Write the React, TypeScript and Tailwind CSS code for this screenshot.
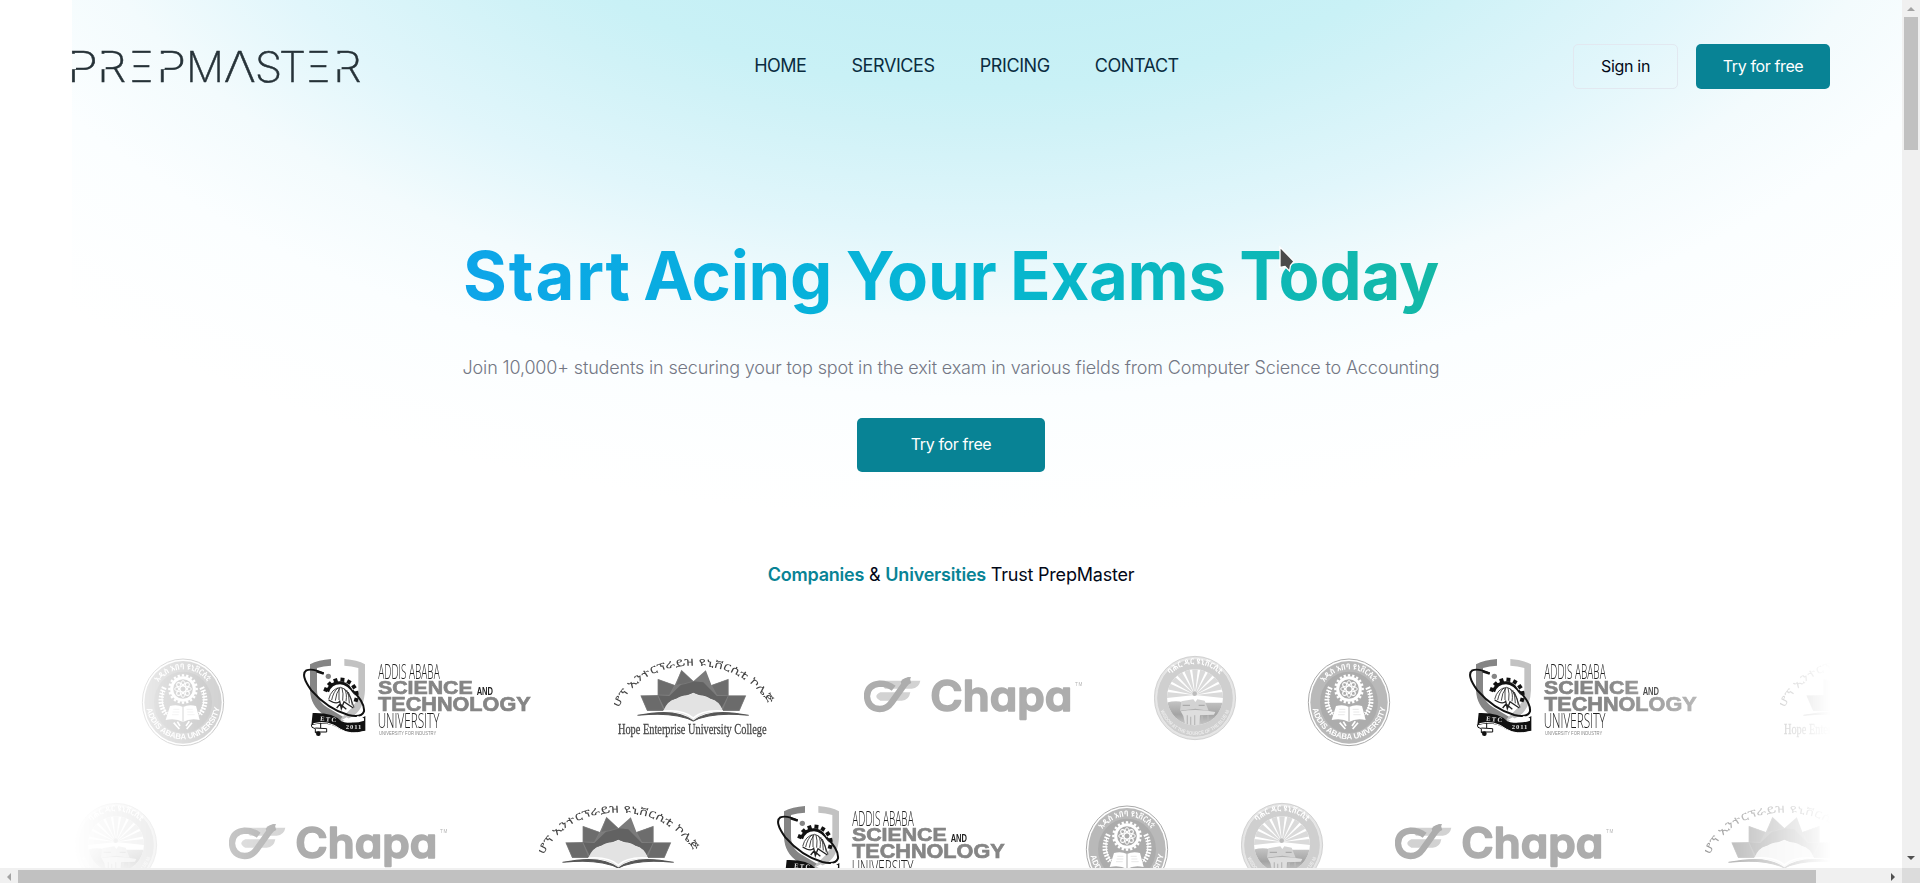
import React from "react";

type LogoProps = { className: string };

const wordmark: { ch: string; x: number; w: number; stem?: number }[] = [
  { ch: "P", x: -5, w: 31, stem: 0 },
  { ch: "R", x: 25, w: 29.4, stem: 29.7 },
  { ch: "Ξ", x: 58, w: 23 },
  { ch: "P", x: 84, w: 30.2, stem: 88.7 },
  { ch: "M", x: 113.9, w: 38 },
  { ch: "Λ", x: 151.8, w: 32 },
  { ch: "S", x: 182.7, w: 27.5 },
  { ch: "T", x: 206.9, w: 27 },
  { ch: "Ξ", x: 235, w: 23 },
  { ch: "R", x: 261, w: 28.6, stem: 265.6 },
];

function Wordmark() {
  return (
    <svg className="h-[39px] w-[288px] overflow-visible" viewBox="0 0 288 39" role="img" aria-label="PrepMaster">
      <mask id="stems" maskUnits="userSpaceOnUse" x="-5" y="-5" width="300" height="50">
        <rect x="-5" y="-5" width="300" height="50" fill="white" />
        {wordmark.filter((l) => l.stem !== undefined).map((l) => (
          <rect key={l.x} x={l.stem! - 2} y="6.8" width="6" height="15.4" fill="black" />
        ))}
      </mask>
      <g mask="url(#stems)" fill="#263238" className="font-['Inter'] text-[42px] font-extralight" stroke="#263238" strokeWidth="0.5">
        {wordmark.map((l) => (
          <text key={l.x} x={l.x} y="35" textLength={l.w} lengthAdjust="spacingAndGlyphs">
            {l.ch}
          </text>
        ))}
      </g>
    </svg>
  );
}

function teeth(cx: number, cy: number, r: number, n: number, size: number, from = 0, to = 360) {
  const out: { x: number; y: number; a: number }[] = [];
  for (let i = 0; i < n; i++) {
    const a = from + ((to - from) * i) / n;
    const t = (a * Math.PI) / 180;
    out.push({ x: cx + r * Math.cos(t), y: cy + r * Math.sin(t), a });
  }
  return out.map((p, i) => (
    <rect key={i} x={p.x - size / 2} y={p.y - size / 2} width={size} height={size} transform={`rotate(${p.a} ${p.x} ${p.y})`} />
  ));
}

function AddisAbabaSeal({ className, id }: LogoProps & { id: string }) {
  return (
    <svg className={className} viewBox="501 0 255 441" preserveAspectRatio="xMinYMin meet">
      <defs>
        <path id={`${id}-top`} d="M553 127 A93 98 0 0 1 702 127" />
        <path id={`${id}-bottom`} d="M517 203 A112 117 0 0 0 737 203" />
      </defs>
      <ellipse cx="627" cy="187" rx="122" ry="130" fill="#fff" stroke="#a9a9a9" strokeWidth="3" />
      <ellipse cx="627" cy="187" rx="116" ry="124" fill="#b9b9b9" />
      <ellipse cx="627" cy="187" rx="87" ry="92" fill="#acacac" />
      <g fill="#fff" className="font-['Noto_Sans_Ethiopic','Noto_Sans',sans-serif] text-[24px] font-bold">
        <text textLength="172" lengthAdjust="spacingAndGlyphs">
          <textPath href={`#${id}-top`}>አዲስ አበባ ዩኒቨርሲቲ</textPath>
        </text>
      </g>
      <g fill="#fff" className="font-['Liberation_Sans',sans-serif] text-[24px] font-bold">
        <text textLength="312" lengthAdjust="spacingAndGlyphs">
          <textPath href={`#${id}-bottom`} startOffset="3">ADDIS ABABA UNIVERSITY</textPath>
        </text>
      </g>
      <circle cx="627" cy="147" r="34" fill="none" stroke="#fff" strokeWidth="9" />
      <g fill="#fff">{teeth(627, 147, 41, 20, 7)}</g>
      <g fill="none" stroke="#fff" strokeWidth="3">
        <ellipse cx="627" cy="147" rx="25" ry="9" />
        <ellipse cx="627" cy="147" rx="25" ry="9" transform="rotate(45 627 147)" />
        <ellipse cx="627" cy="147" rx="25" ry="9" transform="rotate(90 627 147)" />
        <ellipse cx="627" cy="147" rx="25" ry="9" transform="rotate(135 627 147)" />
      </g>
      <path d="M588 198 Q610 192 627 201 Q645 192 666 198 L677 240 Q648 234 627 246 Q606 234 575 240Z" fill="#fff" />
      <path d="M627 201 V245" stroke="#aaa" strokeWidth="3" />
      <path d="M598 208 h18 M596 216 h20 M594 224 h20 M638 208 h18 M640 216 h18 M640 224 h22" stroke="#ddd" strokeWidth="2" />
      <path d="M599 248 L616 267 M654 248 L638 267 M610 245 L618 258 M646 244 L636 258" stroke="#fff" strokeWidth="5" />
      <g fill="none" stroke="#fff">
        <path d="M571 142 Q549 190 576 222" strokeWidth="15" strokeDasharray="5 4" />
        <path d="M683 142 Q705 190 678 222" strokeWidth="15" strokeDasharray="5 4" />
        <path d="M566 150 Q558 196 580 226" strokeWidth="3" />
        <path d="M688 150 Q696 196 674 226" strokeWidth="3" />
      </g>
    </svg>
  );
}

function ScienceTechLogo({ className }: LogoProps) {
  return (
    <svg className={className} viewBox="609 0 750 441" preserveAspectRatio="xMinYMin meet">
      <path d="M693 57 Q655 60 630 73 V150 Q632 200 672 224 L722 247 L735 234 L690 207 Q651 188 651 150 V84 Q670 78 693 77Z" fill="#858585" />
      <path d="M733 57 Q772 60 795 73 V150 Q793 205 760 228 L722 248 L722 236 L745 214 Q774 192 775 150 V84 Q755 78 733 77Z" fill="#c2c2c2" />
      <circle cx="685" cy="109" r="8" fill="#858585" />
      <path d="M678 152 Q690 122 722 124 Q752 126 764 166 Q742 133 720 133 Q695 133 687 157Z" fill="#111" />
      <g fill="#111">{teeth(722, 167, 48, 8, 12, 202, 400)}</g>
      <g fill="none" stroke="#222" strokeWidth="2.5">
        <path d="M686 178 Q694 145 722 142 Q745 145 762 202" />
        <path d="M695 180 Q700 155 714 144 M706 182 Q708 158 720 144 M717 180 V144 M728 182 Q731 160 726 144 M738 184 Q742 160 733 146 M748 190 Q748 165 740 150 M757 196 Q754 172 745 156" />
        <path d="M686 180 Q710 195 719 184 L724 206 L732 185 L760 204 M710 204 L720 192 L739 208" strokeWidth="4" />
      </g>
      <path d="M671 100 Q637 84 619 91 Q600 104 634 151 Q683 207 745 225 Q785 234 792 214 Q795 188 757 151" fill="none" stroke="#111" strokeWidth="6" />
      <path d="M650 94 L671 101" stroke="#111" strokeWidth="7" />
      <path d="M638 219 Q700 217 724 244 Q750 258 796 228 L796 272 Q755 286 720 268 Q685 243 634 256Z" fill="#111" />
      <path d="M640 251 Q684 239 722 268 Q751 286 794 274 M728 238 Q752 248 790 228" fill="none" stroke="#fff" strokeWidth="3" />
      <path d="M727 239 L740 232 L757 244 L773 228 L792 235 L792 242 Q755 255 727 239Z" fill="#fff" />
      <path d="M634 254 L636 262 L646 266 V278 H656 V287 M646 264 L680 266 V276 H646 M662 250 V264" fill="none" stroke="#111" strokeWidth="3" />
      <circle cx="655" cy="281" r="7" fill="#111" />
      <g fill="#e5e5e5" className="font-['Liberation_Serif',serif] text-[20px] font-bold">
        <text x="660" y="242" textLength="48" transform="rotate(5 660 242)">ETC</text>
        <text x="737" y="268" textLength="47">2011</text>
      </g>
      <g fill="#202020" className="font-['Open_Sans',sans-serif] font-light">
        <text x="835" y="118" textLength="184" lengthAdjust="spacingAndGlyphs" className="text-[60px]">ADDIS ABABA</text>
        <text x="833" y="265" textLength="185" lengthAdjust="spacingAndGlyphs" className="text-[60px]">UNIVERSITY</text>
      </g>
      <g fill="#858585" stroke="#858585" strokeWidth="2" className="font-['Liberation_Sans',sans-serif] font-bold">
        <text x="834" y="163" textLength="284" lengthAdjust="spacingAndGlyphs" className="text-[57px]">SCIENCE</text>
        <text x="834" y="212" textLength="458" lengthAdjust="spacingAndGlyphs" className="text-[59px]">TECHNOLOGY</text>
      </g>
      <text x="1130" y="164" textLength="49" lengthAdjust="spacingAndGlyphs" fill="#222" className="font-['Liberation_Sans',sans-serif] text-[32px] font-bold">AND</text>
      <text x="837" y="284" textLength="172" lengthAdjust="spacingAndGlyphs" fill="#888" className="font-['Liberation_Sans',sans-serif] text-[14px]">UNIVERSITY FOR INDUSTRY</text>
    </svg>
  );
}

function HopeLogo({ className, id }: LogoProps & { id: string }) {
  return (
    <svg className={className} viewBox="0 0 238 147" preserveAspectRatio="xMinYMin meet">
      <g transform="scale(0.35714 0.33333) translate(-95 -300)">
        <defs>
          <path id={id} d="M108 504 Q165 379 317 377 Q469 379 534 504" />
        </defs>
        <path d="M170 467 L218 465 V418 L265 436 L284 391 L317 424 L352 391 L368 436 L415 418 V467 H464 L446 513 H400 Q392 480 345 470 L317 459 L290 470 Q240 480 235 513 H188Z" fill="#7b7b7b" />
        <path d="M218 465 L250 468 L290 427 L317 424 L345 427 L383 468 L415 467 L394 508 L378 480 L345 468 L317 458 L290 468 L255 480 L238 508Z" fill="#626262" />
        <path d="M218 465 V418 L265 436 L250 466Z M284 391 L317 424 L290 432 L268 436Z M415 467 V418 L368 436 L383 466Z" fill="#6d6d6d" stroke="#858585" strokeWidth="1.5" />
        <path d="M170 467 H218 L235 511 H188Z M464 467 H415 L398 511 H446Z" fill="#6b6b6b" stroke="#858585" strokeWidth="1.5" />
        <path d="M233 514 Q243 482 268 478 Q283 465 305 466 L317 458 L330 466 Q352 465 366 478 Q391 482 400 514 Q345 514 317 540 Q288 514 233 514Z" fill="#e3e3e3" />
        <path d="M233 513 Q290 508 317 534 Q343 508 400 513" fill="none" stroke="#fff" strokeWidth="5" />
        <path d="M162 526 Q270 502 317 543 Q363 502 471 526 Q370 514 317 543 Q264 514 162 526Z" fill="#555" stroke="#555" strokeWidth="3" strokeLinejoin="round" />
        <text fill="#444" textLength="512" lengthAdjust="spacingAndGlyphs" className="font-['Noto_Sans_Ethiopic','Noto_Sans',sans-serif] text-[29px]">
          <textPath href={`#${id}`}>ሆፕ ኢንተርፕራይዝ ዩኒቨርሲቲ ኮሌጅ</textPath>
        </text>
        <text x="106" y="582" textLength="416" lengthAdjust="spacingAndGlyphs" fill="#444" stroke="#444" strokeWidth="0.8" className="font-['Liberation_Serif',serif] text-[42px]">
          Hope Enterprise University College
        </text>
      </g>
    </svg>
  );
}

function ChapaLogo({ className }: LogoProps) {
  return (
    <svg className={className} viewBox="387 441 700 441" preserveAspectRatio="xMinYMin meet">
      <path d="M430 563 H556 Q552 585 530 587 H450Z" fill="#d2d2d2" />
      <path d="M436 598 H526 Q522 622 500 623 H436 Q412 610 436 598Z" fill="#d2d2d2" />
      <path d="M476 586 Q458 572 434 572 Q396 576 396 610 Q398 646 434 648 Q456 648 470 628 L508 575 Q516 564 526 561" fill="none" stroke="#adadad" strokeWidth="19" />
      <path d="M497 566 Q506 552 528 552 L522 568 L505 590Z" fill="#adadad" />
      <text
        x="586"
        y="654"
        textLength="426"
        lengthAdjust="spacingAndGlyphs"
        fill="#adadad"
        stroke="#adadad"
        strokeWidth="5"
        strokeLinejoin="round"
        className="font-['Inter',sans-serif] text-[128px] font-semibold [font-feature-settings:'cv11']"
      >
        Chapa
      </text>
      <text x="1020" y="579" textLength="22" fill="#b5b5b5" className="font-['Liberation_Sans',sans-serif] text-[14px]">TM</text>
    </svg>
  );
}

function SunriseSeal({ className, id }: LogoProps & { id: string }) {
  const rays = Array.from({ length: 11 }, (_, i) => 180 + i * 18);
  return (
    <svg className={className} viewBox="42 0 250 441" preserveAspectRatio="xMinYMin meet">
      <defs>
        <path id={`${id}-top`} d="M92 104 A102 102 0 0 1 240 104" />
        <path id={`${id}-bottom`} d="M62 212 A110 112 0 0 0 268 212" />
        <clipPath id={`${id}-clip`}>
          <circle cx="165" cy="172" r="84" />
        </clipPath>
        <linearGradient id={`${id}-land`} x1="0" x2="0" y1="0" y2="1">
          <stop offset="0" stopColor="#c4c4c4" />
          <stop offset="0.5" stopColor="#a4a4a4" />
          <stop offset="1" stopColor="#d0d0d0" />
        </linearGradient>
      </defs>
      <ellipse cx="165" cy="174" rx="122" ry="125" fill="#e4e4e4" stroke="#c2c2c2" strokeWidth="2" />
      <ellipse cx="165" cy="174" rx="115" ry="118" fill="#cfcfcf" stroke="#eee" strokeWidth="2" />
      <circle cx="165" cy="172" r="84" fill="#fff" />
      <g clipPath={`url(#${id}-clip)`}>
        {rays.map((a) => (
          <path key={a} d="M165 165 L265 154 L265 176Z" fill="#dadada" transform={`rotate(${a} 165 165)`} />
        ))}
        <path d="M80 188 Q110 180 130 188 H250 V262 H80Z" fill={`url(#${id}-land)`} />
        <path d="M124 184 L160 178 L166 186 L172 178 L194 182 L206 212 L166 206 L120 212Z" fill="#d3d3d3" />
        <path d="M128 196 h22 M176 196 h18" stroke="#aaa" strokeWidth="4" />
        <path d="M122 214 Q170 205 226 216 L222 224 L180 226 L178 256 H136 L130 228Z" fill="#dedede" />
        <path d="M142 226 V254 M152 230 V256 M164 226 V256 M186 228 V250 M204 226 V240" stroke="#bbb" strokeWidth="4" />
        <circle cx="164" cy="161" r="7" fill="#bcbcbc" />
      </g>
      <g fill="#fff" className="font-['Noto_Sans_Ethiopic','Noto_Sans',sans-serif] text-[24px] font-bold">
        <text textLength="164" lengthAdjust="spacingAndGlyphs">
          <textPath href={`#${id}-top`}>ባሕር ዳር ዩኒቨርሲቲ</textPath>
        </text>
      </g>
      <g fill="#ececec" className="font-['Liberation_Sans',sans-serif] text-[15px] font-bold">
        <text textLength="285" lengthAdjust="spacingAndGlyphs">
          <textPath href={`#${id}-bottom`}>WISDOM AT THE SOURCE OF THE BLUE NILE</textPath>
        </text>
      </g>
    </svg>
  );
}

function Scrollbars() {
  return (
    <>
      <div className="absolute right-0 top-0 h-[868px] w-[18px] bg-[#f0f0f0]">
        <svg className="absolute left-[5px] top-[7px] h-[4px] w-[8px]" viewBox="0 0 8 4"><path d="M4 0 L8 4 H0Z" fill="#a3a3a3" /></svg>
        <div className="absolute left-[2px] top-[17px] h-[133px] w-[14px] bg-[#c1c1c1]" />
        <svg className="absolute bottom-[8px] left-[5px] h-[4px] w-[8px]" viewBox="0 0 8 4"><path d="M0 0 H8 L4 4Z" fill="#505050" /></svg>
      </div>
      <div className="absolute bottom-0 left-0 h-[15px] w-[1902px] bg-[#f0f0f0]">
        <svg className="absolute left-[7px] top-[5px] h-[8px] w-[4px]" viewBox="0 0 4 8"><path d="M4 0 V8 L0 4Z" fill="#a3a3a3" /></svg>
        <div className="absolute bottom-0 left-[18px] h-[13px] w-[1798px] bg-[#c1c1c1]" />
        <svg className="absolute right-[7px] top-[5px] h-[8px] w-[4px]" viewBox="0 0 4 8"><path d="M0 0 V8 L4 4Z" fill="#505050" /></svg>
      </div>
      <div className="absolute bottom-0 right-0 h-[15px] w-[18px] bg-[#dcdcdc]" />
    </>
  );
}

export default function App() {
  const strip =
    "flex h-[147px] overflow-hidden [mask-image:linear-gradient(to_right,transparent,#000_13%,#000_87%,transparent)]";
  return (
    <div className="relative h-[883px] w-[1920px] overflow-hidden bg-white font-['Inter',sans-serif] text-[#020817]">
      <div className="absolute left-[72px] top-0 h-[560px] w-[1830px] bg-[radial-gradient(ellipse_1300px_720px_at_50%_-200px,#c4eff5_28%,#c9f1f6_40%,#d0f2f7_46%,#e1f6fb_60%,#f3fbfd_72%,#fbfeff_83%,#ffffff_100%)]" />

      <div className="relative flex w-[1902px] flex-col px-[72px]">
        <header className="flex h-[133px] items-center justify-between">
          <Wordmark />
          <nav className="flex gap-[45px] pb-[2px] text-[18px] leading-7 text-[#0a2c3f]">
            <a className="tracking-[-0.5px]">HOME</a>
            <a className="tracking-[-0.4px]">SERVICES</a>
            <a className="tracking-[-0.4px]">PRICING</a>
            <a className="tracking-[-0.45px]">CONTACT</a>
          </nav>
          <div className="flex gap-[18px] text-[16px]">
            <button className="h-[45px] w-[105px] rounded-[5px] border border-[#e2e8f0] pb-[2px] tracking-[-0.3px]">Sign in</button>
            <button className="h-[45px] w-[134px] rounded-[5px] bg-[#088395] pb-[2px] tracking-[-0.37px] text-white">Try for free</button>
          </div>
        </header>

        <main className="flex flex-col items-center">
          <h1 className="mt-[107px] bg-gradient-to-r from-[#0ea5e9] via-[#06b6d4] to-[#14b8a6] bg-clip-text pb-3 text-[67px] font-bold leading-[72px] tracking-[-0.22px] whitespace-nowrap text-transparent [word-spacing:-2.2px]">
            <span className="tracking-[1.9px]">Star</span>t Acing Your Exams Today
          </h1>
          <p className="mt-[30px] text-[18px] font-light leading-7 tracking-[-0.155px] whitespace-nowrap text-[#737784]">
            Join 10,000+ students in securing your top spot in the exit exam in various fields from Computer Science to Accounting
          </p>
          <button className="mt-[36px] h-[54px] w-[188px] rounded-[5px] bg-[#088395] pb-[2px] text-[16px] tracking-[-0.37px] text-white">
            Try for free
          </button>
          <h2 className="mt-[89px] text-[18px] leading-7 tracking-[-0.21px] whitespace-nowrap">
            <span className="font-semibold text-[#088395]">Companies</span> &amp;{" "}
            <span className="font-semibold text-[#088395]">Universities</span> Trust PrepMaster
          </h2>
        </main>

        <section className="mt-[51px] flex flex-col">
          <div className={`${strip} pl-[69px]`}>
            <AddisAbabaSeal id="aau-a" className="h-[147px] w-[162px] shrink-0" />
            <ScienceTechLogo className="h-[147px] w-[311px] shrink-0" />
            <HopeLogo id="hope-a" className="h-[147px] w-[250px] shrink-0" />
            <ChapaLogo className="h-[147px] w-[290px] shrink-0" />
            <SunriseSeal id="sun-a" className="h-[147px] w-[153px] shrink-0" />
            <AddisAbabaSeal id="aau-b" className="h-[147px] w-[162px] shrink-0" />
            <ScienceTechLogo className="h-[147px] w-[311px] shrink-0" />
            <HopeLogo id="hope-b" className="h-[147px] w-[250px] shrink-0" />
          </div>
          <div className={`${strip} pl-[3px]`}>
            <SunriseSeal id="sun-b" className="h-[147px] w-[154px] shrink-0" />
            <ChapaLogo className="h-[147px] w-[310px] shrink-0" />
            <HopeLogo id="hope-c" className="h-[147px] w-[238px] shrink-0" />
            <ScienceTechLogo className="h-[147px] w-[308px] shrink-0" />
            <AddisAbabaSeal id="aau-c" className="h-[147px] w-[156px] shrink-0" />
            <SunriseSeal id="sun-c" className="h-[147px] w-[154px] shrink-0" />
            <ChapaLogo className="h-[147px] w-[310px] shrink-0" />
            <HopeLogo id="hope-d" className="h-[147px] w-[238px] shrink-0" />
          </div>
        </section>
      </div>

      <svg className="absolute left-[1278px] top-[244px] h-[30px] w-[20px]" viewBox="0 0 20 30">
        <path d="M2 3 L2 23.5 L7 22.5 L11.5 27 L12.5 21.5 L16 17.5Z" fill="#4a4a4a" stroke="#fff" strokeWidth="1.3" />
      </svg>

      <Scrollbars />
    </div>
  );
}
